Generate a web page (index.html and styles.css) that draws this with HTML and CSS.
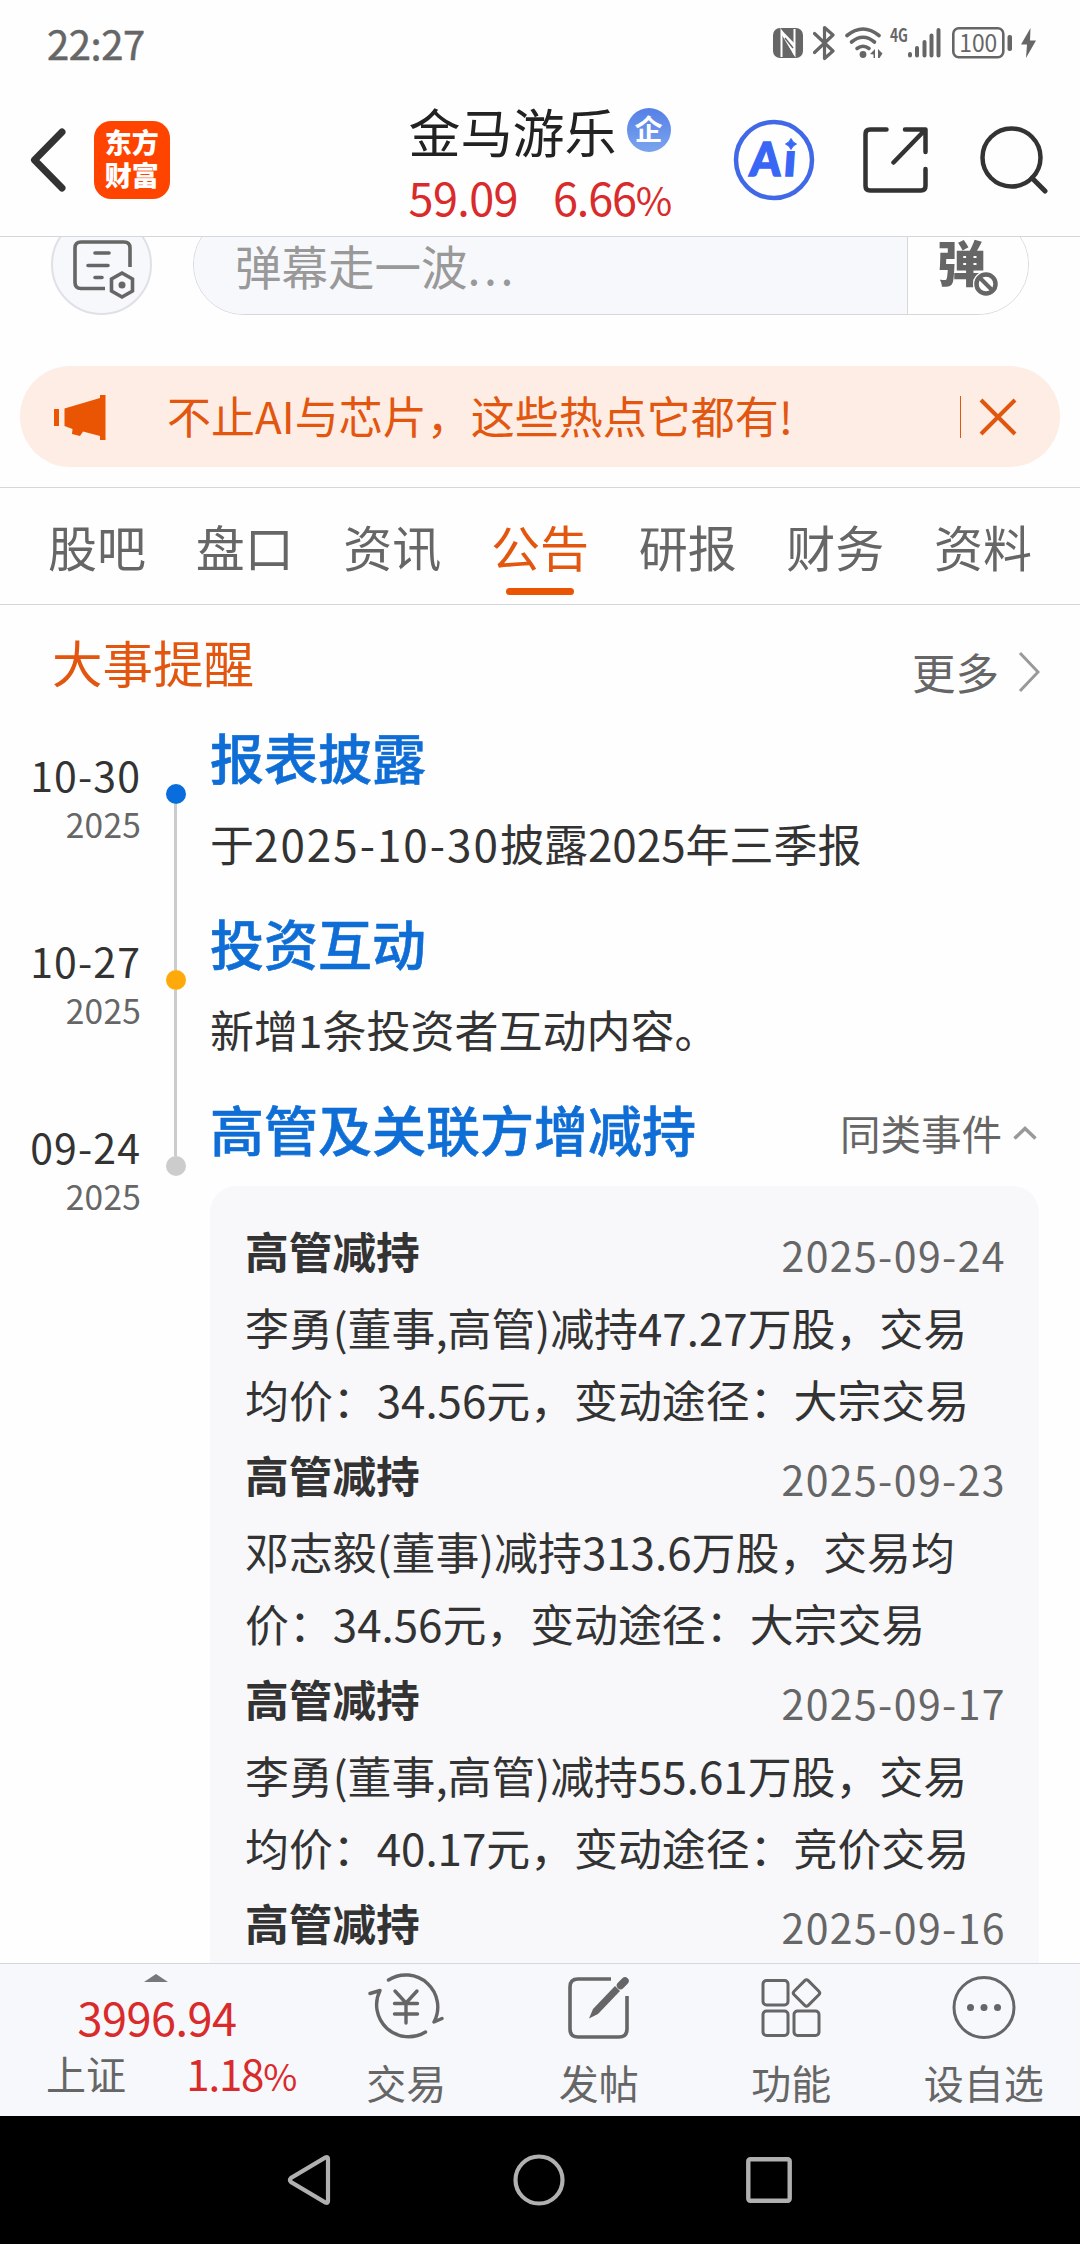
FILE: index.html
```html
<!DOCTYPE html>
<html lang="zh-CN">
<head>
    <meta charset="UTF-8">
    <meta name="viewport" content="width=device-width, initial-scale=1.0">
    <title>金马游乐 - 公告</title>
    <link rel="stylesheet" href="styles.css">
</head>
<body>
    <div class="status-bar">
        <span class="time">22:27</span>
        <div class="status-icons">
            <svg class="icon-nfc" width="30" height="32" viewBox="0 0 30 32">
                <rect x="0" y="1" width="30" height="30" rx="7" fill="#666"/>
                <path d="M8.500 30V4.500L21.500 27V2" fill="none" stroke="#fff" stroke-width="2"/>
                <path d="M9 3.500l12.500 13V29L9 8z" fill="#fff"/>
                <path d="M12 11l8 10M12 17l6 8" stroke="#666" stroke-width="1.500"/>
            </svg>
            <svg class="icon-bt" width="22" height="36" viewBox="0 0 22 36">
                <path d="M1.5 8.500L20 26l-8.500 7.500V2.500L20 10 1.500 27.500" fill="none" stroke="#666" stroke-width="3.2" stroke-linejoin="round" stroke-linecap="round"/>
            </svg>
            <svg class="icon-wifi" width="38" height="34" viewBox="0 0 38 34">
                <g fill="none" stroke="#666" stroke-width="3.6" stroke-linecap="round">
                    <path d="M2 9.500Q18 -3.500 34 9.500"/>
                    <path d="M6.500 16Q18 6.500 29.500 16"/>
                    <path d="M12 22.500Q18 18 24 22.500"/>
                </g>
                <circle cx="18" cy="28.500" r="3.400" fill="#666"/>
                <path d="M30 23v9h-1.500v-3.500L25 28zM33 23v9h1.500l3-4.500z" fill="#666"/>
            </svg>
            <svg class="icon-signal" width="51" height="34" viewBox="0 0 51 34">
                <text x="0" y="15.500" class="net-text" textLength="18" lengthAdjust="spacingAndGlyphs">4G</text>
                <g stroke="#666" stroke-width="4" stroke-linecap="round">
                    <path d="M20 28v1.500M27 22v7.500M34.500 16v13.500M41.500 9.500v20M48.500 4v25.500"/>
                </g>
            </svg>
            <svg class="icon-battery" width="61" height="34" viewBox="0 0 61 34">
                <rect x="1.300" y="2.300" width="50" height="29" rx="5.500" fill="none" stroke="#666" stroke-width="2.600"/>
                <rect x="55.500" y="9" width="4.500" height="16" rx="2" fill="#666"/>
                <text x="26.300" y="25.500" text-anchor="middle" class="battery-text" textLength="38" lengthAdjust="spacingAndGlyphs">100</text>
            </svg>
            <svg class="icon-bolt" width="15" height="30" viewBox="0 0 15 30">
                <path d="M9.500 0L0 16.500h6L5 30l10-17.500H9z" fill="#666"/>
            </svg>
        </div>
    </div>

    <header class="header">
        <svg class="back" width="36" height="64" viewBox="0 0 36 64">
            <path d="M32 4L4.500 32 32 60" fill="none" stroke="#333" stroke-width="7" stroke-linejoin="round" stroke-linecap="round"/>
        </svg>
        <div class="logo">东方<br>财富</div>
        <div class="stock">
            <div class="stock-name">金马游乐<span class="badge">企</span></div>
            <div class="stock-price"><span>59.09</span><span class="rate">6.66<i>%</i></span></div>
        </div>
        <svg class="ai" width="82" height="82" viewBox="0 0 82 82">
            <circle cx="41" cy="41" r="38" fill="none" stroke="#4168e6" stroke-width="4.500"/>
            <g class="ai-text" transform="translate(4 0) skewX(-4)">
                <text y="57"><tspan x="16" textLength="31" lengthAdjust="spacingAndGlyphs">A</tspan><tspan x="50">i</tspan></text>
            </g>
            <rect x="49" y="16" width="15" height="16" fill="#fefefe"/>
            <path d="M58 19.500q1.500 4 5.500 5.500-4 1.500-5.500 5.500-1.500-4-5.500-5.500 4-1.500 5.500-5.500z" fill="#3a66f5" stroke="#3a66f5"/>
        </svg>
        <svg class="share" width="66" height="66" viewBox="0 0 66 66">
            <g fill="none" stroke="#333" stroke-width="4.500" stroke-linecap="round" stroke-linejoin="round">
                <path d="M23.500 2.500H7Q2.500 2.500 2.500 7v52q0 4.500 4.500 4.500h51q4.500 0 4.500-4.500V42"/>
                <path d="M42 2.500h20.500V25M62 3L30.500 35.500"/>
            </g>
        </svg>
        <svg class="search" width="68" height="68" viewBox="0 0 68 68">
            <circle cx="31.500" cy="31.500" r="29" fill="none" stroke="#333" stroke-width="4.500"/>
            <path d="M52 52l13 13" stroke="#333" stroke-width="5" stroke-linecap="round"/>
        </svg>
    </header>

    <main class="content">
        <div class="danmu">
            <div class="danmu-setting">
                <svg width="62" height="60" viewBox="0 0 62 60">
                    <g fill="none" stroke="#666" stroke-width="3.600" stroke-linecap="round">
                        <path d="M32 48.500H8q-6 0-6-6V8q0-6 6-6h43q6 0 6 6v19" stroke-linecap="butt"/>
                        <path d="M22 13h14M15 25.500h20M22 37.500h7"/>
                        <path d="M49 33l10.500 6v12L49 57l-10.500-6V39z"/>
                    </g>
                    <circle cx="49" cy="45" r="3.500" fill="#666"/>
                </svg>
            </div>
            <div class="danmu-box">
                <div class="danmu-input">弹幕走一波<span class="dots">...</span></div>
                <div class="danmu-switch">弹
                    <svg class="ban" width="26" height="26" viewBox="0 0 26 26">
                        <circle cx="13" cy="13" r="13" fill="#fff"/>
                        <circle cx="13" cy="13" r="9.500" fill="#fff" stroke="#666" stroke-width="4.500"/>
                        <path d="M7 7l12 12" stroke="#666" stroke-width="4"/>
                    </svg>
                </div>
            </div>
        </div>

        <div class="banner">
            <svg width="52" height="46" viewBox="0 0 52 46">
                <path d="M0 15h5v17H0zM10.500 14.500L46 4V1h5.500v45H46v-4l-17-4.500-3 4.500-8-2 .5-5-8-3z" fill="#ea5504"/>
            </svg>
            <span class="banner-text">不止AI与芯片，这些热点它都有!</span>
            <span class="banner-line"></span>
            <svg width="38" height="38" viewBox="0 0 38 38">
                <path d="M2 2l34 34M36 2L2 36" stroke="#e0560f" stroke-width="4"/>
            </svg>
        </div>

        <nav class="tabs">
            <span class="tab">股吧</span>
            <span class="tab">盘口</span>
            <span class="tab">资讯</span>
            <span class="tab active">公告</span>
            <span class="tab">研报</span>
            <span class="tab">财务</span>
            <span class="tab">资料</span>
        </nav>

        <div class="section-head">
            <h2>大事提醒</h2>
            <div class="more">更多
                <svg width="22" height="42" viewBox="0 0 22 42">
                    <path d="M2 2l18 19L2 40" fill="none" stroke="#999" stroke-width="3"/>
                </svg>
            </div>
        </div>

        <div class="timeline">
            <div class="item">
                <div class="date">10-30<small>2025</small></div>
                <div class="marker blue"></div>
                <div class="event">
                    <h3>报表披露</h3>
                    <p>于<span class="num">2025-10-30</span>披露2025年三季报</p>
                </div>
            </div>
            <div class="item">
                <div class="date">10-27<small>2025</small></div>
                <div class="marker orange"></div>
                <div class="event">
                    <h3>投资互动</h3>
                    <p>新增1条投资者互动内容。</p>
                </div>
            </div>
            <div class="item">
                <div class="date">09-24<small>2025</small></div>
                <div class="marker gray"></div>
                <div class="event">
                    <div class="event-head">
                        <h3>高管及关联方增减持</h3>
                        <div class="similar">同类事件
                            <svg width="24" height="14" viewBox="0 0 24 14">
                                <path d="M1.500 12.500L12 2.500l10.500 10" fill="none" stroke="#999" stroke-width="3.500"/>
                            </svg>
                        </div>
                    </div>
                    <div class="card">
                        <div class="card-head"><b>高管减持</b><span>2025-09-24</span></div>
                        <div class="card-text">李勇(董事,高管)减持47.27万股，交易<br>均价：34.56元，变动途径：大宗交易</div>
                        <div class="card-head"><b>高管减持</b><span>2025-09-23</span></div>
                        <div class="card-text">邓志毅(董事)减持313.6万股，交易均<br>价：34.56元，变动途径：大宗交易</div>
                        <div class="card-head"><b>高管减持</b><span>2025-09-17</span></div>
                        <div class="card-text">李勇(董事,高管)减持55.61万股，交易<br>均价：40.17元，变动途径：竞价交易</div>
                        <div class="card-head"><b>高管减持</b><span>2025-09-16</span></div>
                    </div>
                </div>
            </div>
        </div>
    </main>

    <footer class="toolbar">
        <div class="index">
            <span class="index-arrow"></span>
            <div class="index-value">3996.94</div>
            <div class="index-row"><span>上证</span><span class="index-rate rate">1.18<i>%</i></span></div>
        </div>
        <div class="tool">
            <svg width="76" height="70" viewBox="0 0 76 70">
                <g fill="none" stroke="#666" stroke-width="3.400" stroke-linecap="round" stroke-linejoin="round">
                    <path d="M20.500 8A32 32 0 0 1 66 50l8-3.500"/>
                    <path d="M57.500 60A32 32 0 0 1 12 18.500L2 21.500"/>
                    <path d="M27 19l11 12 11-12M26.500 31.500h23M26.500 42h23M38 31v20"/>
                </g>
            </svg>
            <span>交易</span>
        </div>
        <div class="tool">
            <svg width="70" height="70" viewBox="0 0 70 70">
                <path d="M47 7H14q-8 0-8 8v42q0 8 8 8h41q8 0 8-8V24" fill="none" stroke="#666" stroke-width="3.600"/>
                <path d="M61 9l-4.500 4.500" stroke="#666" stroke-width="7.500" stroke-linecap="round"/>
                <path d="M51 14l5 5-22 23-9 4.500L29 37z" fill="#666"/>
            </svg>
            <span>发帖</span>
        </div>
        <div class="tool">
            <svg width="70" height="70" viewBox="0 0 70 70">
                <g fill="none" stroke="#666" stroke-width="3">
                    <rect x="7" y="8.500" width="25" height="24.500" rx="3.500"/>
                    <rect x="7" y="39" width="25" height="24.500" rx="3.500"/>
                    <rect x="38" y="39" width="25" height="24.500" rx="3.500"/>
                    <rect x="40.500" y="11" width="20" height="20" rx="2.500" transform="rotate(45 50.500 21)"/>
                </g>
            </svg>
            <span>功能</span>
        </div>
        <div class="tool">
            <svg width="70" height="70" viewBox="0 0 70 70">
                <circle cx="35" cy="35.500" r="30" fill="none" stroke="#666" stroke-width="3"/>
                <g fill="#666">
                    <circle cx="21.500" cy="35.500" r="3.500"/>
                    <circle cx="35" cy="35.500" r="3.500"/>
                    <circle cx="48.500" cy="35.500" r="3.500"/>
                </g>
            </svg>
            <span>设自选</span>
        </div>
    </footer>

    <div class="sys-nav">
        <svg width="44" height="52" viewBox="0 0 44 52">
            <path d="M38.500 3.500Q41 2.500 41 5v42q0 2.500-2.500 1.500L4 28q-2-2 0-4z" fill="none" stroke="#b0b0b0" stroke-width="4.200"/>
        </svg>
        <svg width="52" height="52" viewBox="0 0 52 52">
            <circle cx="26" cy="26" r="23.500" fill="none" stroke="#b0b0b0" stroke-width="4.200"/>
        </svg>
        <svg width="46" height="46" viewBox="0 0 46 46">
            <rect x="2.300" y="2.300" width="41.400" height="41.400" rx="2" fill="none" stroke="#b0b0b0" stroke-width="4.400"/>
        </svg>
    </div>
</body>
</html>
```

FILE: styles.css
```css
:root {
    --orange: #e2560f;
    --red: #d92b2b;
    --blue: #0f6dd6;
    --text: #333;
    --gray: #666;
    --line: #d5d7da;
    --panel: #f7f8fb;
}

* {
    box-sizing: border-box;
}

body {
    margin: 0;
    width: 1080px;
    height: 2244px;
    display: flex;
    flex-direction: column;
    overflow: hidden;
    background: #fefefe;
    color: var(--text);
    font-family: "Noto Sans CJK SC", sans-serif;
}

svg {
    display: block;
    flex: none;
}

h2, h3, p {
    margin: 0;
}

/* Status bar */
.status-bar {
    height: 84px;
    padding: 2px 44px 0 47px;
    display: flex;
    justify-content: space-between;
    align-items: center;
}

.time {
    font-size: 40px;
    line-height: 50px;
    letter-spacing: -0.4px;
    color: var(--gray);
    -webkit-text-stroke: 0.5px var(--gray);
}

.status-icons {
    display: flex;
    align-items: center;
}

.icon-bt { margin-left: 10px; }
.icon-wifi { margin-left: 10px; }
.icon-signal { margin-left: 7px; }
.icon-battery { margin-left: 11px; }
.icon-bolt { margin-left: 8px; }

.net-text {
    font-size: 18px;
    font-weight: bold;
    fill: var(--gray);
}

.battery-text {
    font-size: 24px;
    fill: var(--gray);
}

/* Header */
.header {
    height: 153px;
    display: flex;
    align-items: center;
    padding: 0 32px 0 30px;
    border-bottom: 1px solid var(--line);
}

.logo {
    width: 76px;
    height: 78px;
    margin-left: 28px;
    padding-top: 4px;
    border-radius: 17px;
    background: #ff4400;
    color: #fff;
    font-size: 27px;
    font-weight: 900;
    line-height: 33px;
    text-align: center;
}

.stock {
    width: 264px;
    margin-left: 239px;
    padding-top: 9px;
}

.stock-name {
    display: flex;
    align-items: center;
    font-size: 52px;
    line-height: 66px;
    color: #222;
}

.badge {
    width: 44px;
    height: 44px;
    margin: 0 0 2px 10px;
    border-radius: 50%;
    background: linear-gradient(#5580e6, #7ba4ee);
    color: #fff;
    font-size: 28px;
    font-weight: bold;
    line-height: 40px;
    text-align: center;
}

.stock-price {
    display: flex;
    justify-content: space-between;
    font-size: 45px;
    line-height: 66px;
    letter-spacing: -0.6px;
    color: var(--red);
}

/* Tighter setting for percentages */
.rate {
    letter-spacing: -1.2px;
}

.rate i {
    font-style: normal;
    font-size: 0.88em;
}

.ai { margin-left: 62px; }
.share { margin-left: 48px; }
.search { margin-left: 51px; }

.ai-text {
    font-family: Lato, sans-serif;
    font-size: 47px;
    font-weight: 900;
    fill: #3a66f5;
    stroke: #3a66f5;
    stroke-width: 1.5px;
}

.content {
    flex: 1;
    min-height: 0;
    overflow: hidden;
}

/* Bullet comment row, scrolled partly under the header */
.danmu {
    display: flex;
    height: 101px;
    margin-top: -23px;
    padding: 0 51px;
}

.danmu-setting {
    width: 101px;
    padding: 24px 0 0 20px;
    border: 2px solid #dfe1e6;
    border-radius: 50%;
    background: var(--panel);
}

.danmu-box {
    flex: 1;
    display: flex;
    margin-left: 41px;
    border: 1px solid var(--line);
    border-radius: 51px;
    overflow: hidden;
}

.danmu-input {
    flex: 1;
    padding-left: 41px;
    background: var(--panel);
    color: #999;
    font-size: 46.5px;
    line-height: 99px;
}

.dots {
    letter-spacing: 3.6px;
}

.danmu-switch {
    position: relative;
    width: 121px;
    padding-left: 29px;
    border-left: 1px solid var(--line);
    background: #fefefe;
    color: var(--gray);
    font-size: 49px;
    font-weight: 900;
    line-height: 91px;
}

.ban {
    position: absolute;
    left: 65px;
    top: 56px;
}

/* Notice banner */
.banner {
    display: flex;
    align-items: center;
    height: 101px;
    margin: 51px 20px 0;
    padding: 0 43px 0 34px;
    border-radius: 51px;
    background: #fdede4;
}

.banner-text {
    flex: 1;
    margin-left: 61px;
    padding-bottom: 4px;
    color: var(--orange);
    font-size: 44px;
    line-height: 60px;
    white-space: nowrap;
}

.banner-line {
    width: 1px;
    height: 42px;
    margin-right: 18px;
    background: var(--orange);
}

/* Tabs */
.tabs {
    display: flex;
    justify-content: space-between;
    height: 118px;
    margin-top: 20px;
    padding: 0 48px 0 48px;
    border-top: 1px solid var(--line);
    border-bottom: 1px solid var(--line);
}

.tab {
    display: flex;
    flex-direction: column;
    align-items: center;
    color: var(--gray);
    font-size: 49px;
    line-height: 116px;
}

.tab.active {
    color: var(--orange);
}

.tab.active::after {
    content: "";
    width: 68px;
    height: 7px;
    margin-top: -16px;
    border-radius: 4px;
    background: #ea5504;
}

.section-head {
    display: flex;
    justify-content: space-between;
    height: 118px;
    padding: 0 40px 0 52px;
}

.section-head h2 {
    color: var(--orange);
    font-size: 50.5px;
    font-weight: normal;
    line-height: 112px;
}

.more {
    display: flex;
    align-items: center;
    gap: 19px;
    padding-top: 15px;
    color: var(--gray);
    font-size: 43.5px;
    line-height: 96px;
}

/* Timeline */
.item {
    display: grid;
    grid-template-columns: 141px 69px 829px;
    height: 186px;
}

.date {
    padding-top: 26px;
    text-align: right;
    font-size: 41px;
    line-height: 50px;
    letter-spacing: 1.1px;
}

.date small {
    display: block;
    margin-top: 8px;
    color: var(--gray);
    font-size: 33.5px;
    line-height: 34px;
    letter-spacing: 0.2px;
}

.marker {
    display: flex;
    flex-direction: column;
    align-items: center;
    padding-top: 61px;
}

.marker::before {
    content: "";
    width: 20px;
    height: 20px;
    border-radius: 50%;
    background: var(--dot);
}

.marker::after {
    content: "";
    width: 3px;
    height: 166px;
    background: #ccc;
}

.marker.blue { --dot: #0a6ddd; }
.marker.orange { --dot: #ffa90a; }
.marker.gray { --dot: #ccc; }

.marker.gray::after {
    display: none;
}

.event h3 {
    color: var(--blue);
    font-size: 54px;
    font-weight: 500;
    line-height: 68px;
    -webkit-text-stroke: 0.6px var(--blue);
}

.event p {
    margin-top: 22px;
    font-size: 44px;
    line-height: 60px;
    white-space: nowrap;
}

.num {
    letter-spacing: 2px;
}

.event-head {
    display: flex;
    justify-content: space-between;
}

.similar {
    display: flex;
    align-items: center;
    gap: 11px;
    padding: 7px 2px 0 0;
    color: var(--gray);
    font-size: 40.5px;
    line-height: 62px;
}

.card {
    margin-top: 22px;
    padding: 26px 33px 0 35px;
    border-radius: 26px 26px 0 0;
    background: #f8f8fb;
    height: 800px;
}

.card-head {
    display: flex;
    justify-content: space-between;
    font-size: 43.7px;
    line-height: 76px;
    height: 79px;
}

.card-head b {
    font-weight: 700;
}

.card-head span {
    padding-top: 4px;
    color: var(--gray);
    font-size: 41px;
    letter-spacing: 1.4px;
}

.card-text {
    margin-bottom: 1px;
    font-size: 43.9px;
    line-height: 72px;
    white-space: nowrap;
}

/* Bottom toolbar */
.toolbar {
    display: grid;
    grid-template-columns: 310px repeat(4, 192.5px);
    height: 153px;
    border-top: 1px solid var(--line);
    background: var(--panel);
    color: var(--gray);
}

.index {
    display: flex;
    flex-direction: column;
    align-items: center;
    padding: 10px 14px 0 46px;
}

.index-arrow {
    border: 12px solid transparent;
    border-top: none;
    border-bottom: 8px solid #77787c;
    margin-right: 30px;
}

.index-value {
    margin: 7px 28px 0 0;
    color: var(--red);
    font-size: 45px;
    line-height: 56px;
    letter-spacing: -0.5px;
}

.index-row {
    display: flex;
    justify-content: space-between;
    width: 250px;
    font-size: 40px;
    line-height: 56px;
}

.index-rate {
    color: var(--red);
    font-size: 42px;
}

.tool {
    display: flex;
    flex-direction: column;
    align-items: center;
    padding-top: 8px;
    font-size: 40px;
    line-height: 50px;
}

.tool span {
    margin-top: 15px;
}

/* System navigation */
.sys-nav {
    display: flex;
    justify-content: space-between;
    align-items: center;
    height: 128px;
    padding: 0 288px 0 287px;
    background: #000;
}
```
